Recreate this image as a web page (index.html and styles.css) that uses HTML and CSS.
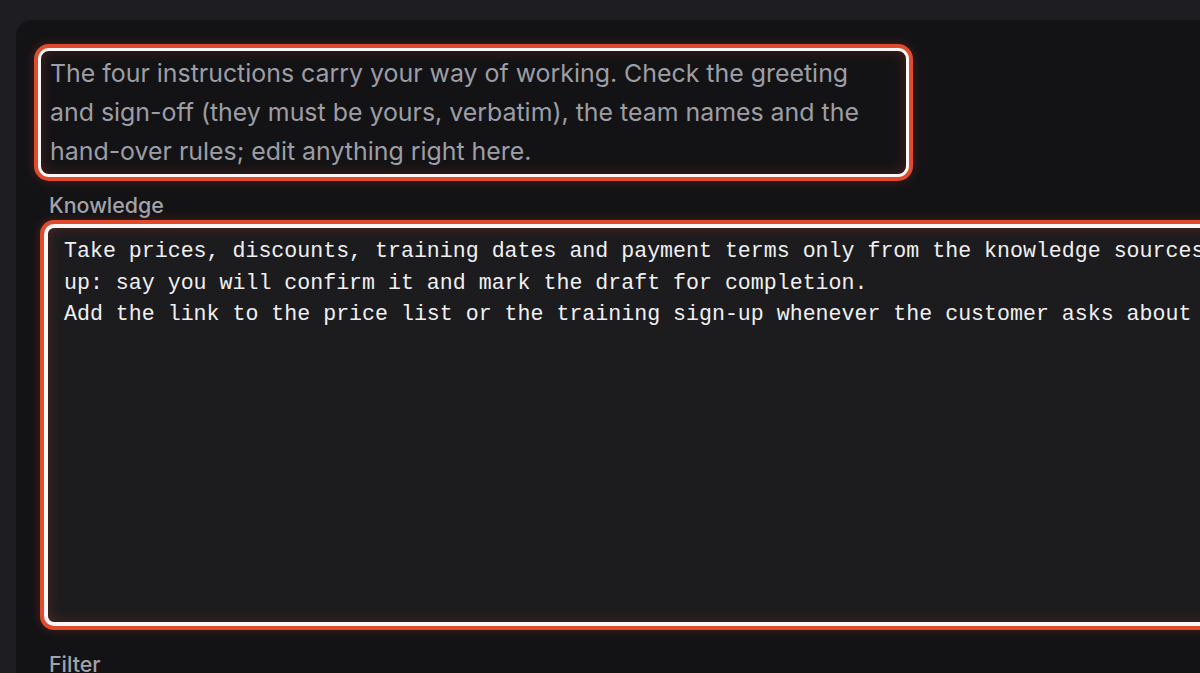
FILE: index.html
```html
<!DOCTYPE html>
<html lang="en">
<head>
<meta charset="utf-8">
<title>Instructions</title>
<link rel="stylesheet" href="styles.css">
</head>
<body>
<div class="panel">
  <p class="intro hl">The four instructions carry your way of working. Check the greeting<br>and sign-off (they must be yours, verbatim), the team names and the<br>hand-over rules; edit anything right here.</p>
  <div class="label">Knowledge</div>
  <div class="area hl">
    <div class="line">Take prices, discounts, training dates and payment terms only from the knowledge sources</div>
    <div class="line">up: say you will confirm it and mark the draft for completion.</div>
    <div class="line">Add the link to the price list or the training sign-up whenever the customer asks about it.</div>
  </div>
  <div class="label filter">Filter</div>
</div>
</body>
</html>
```

FILE: styles.css
```css
html, body {
  margin: 0;
  padding: 0;
  height: 100%;
  overflow: hidden;
  background: #1e1e22;
}

.panel {
  margin: 20px 0 0 16px;
  height: 700px;
  background: #131316;
  border-radius: 16px 0 0 0;
  padding: 28px 0 0 32px;
  box-sizing: border-box;
  overflow: hidden;
}

.hl {
  border: 3px solid #fbf7f6;
  box-shadow: 0 0 0 4px #e14b2d, 0 0 10px 5px rgba(225, 75, 45, 0.22), inset 0 0 14px rgba(225, 75, 45, 0.25);
}

.intro {
  margin: 0 0 0 -10px;
  width: 871px;
  box-sizing: border-box;
  padding: 3px 0 3px 9px;
  border-radius: 11px;
  font-family: Inter, "Noto Sans", sans-serif;
  font-size: 24.9px;
  line-height: 39px;
  color: #9d9da4;
  background: #131316;
}

.label {
  margin-top: 16px;
  font-family: Inter, "Noto Sans", sans-serif;
  font-size: 21.4px;
  font-weight: 500;
  line-height: 25px;
  color: #a2a2a9;
  padding-left: 1px;
}

.area {
  margin: 6px 0 0 -4px;
  width: 1300px;
  height: 402px;
  box-sizing: border-box;
  border-width: 4px;
  border-radius: 10px;
  padding: 8px 0 0 16px;
  background: #1c1c1f;
  font-family: "Liberation Mono", "DejaVu Sans Mono", monospace;
  font-size: 21.6px;
  line-height: 31.5px;
  color: #f0f0f2;
  overflow: hidden;
}

.line {
  white-space: pre;
}

.filter {
  margin-top: 26px;
}
```
